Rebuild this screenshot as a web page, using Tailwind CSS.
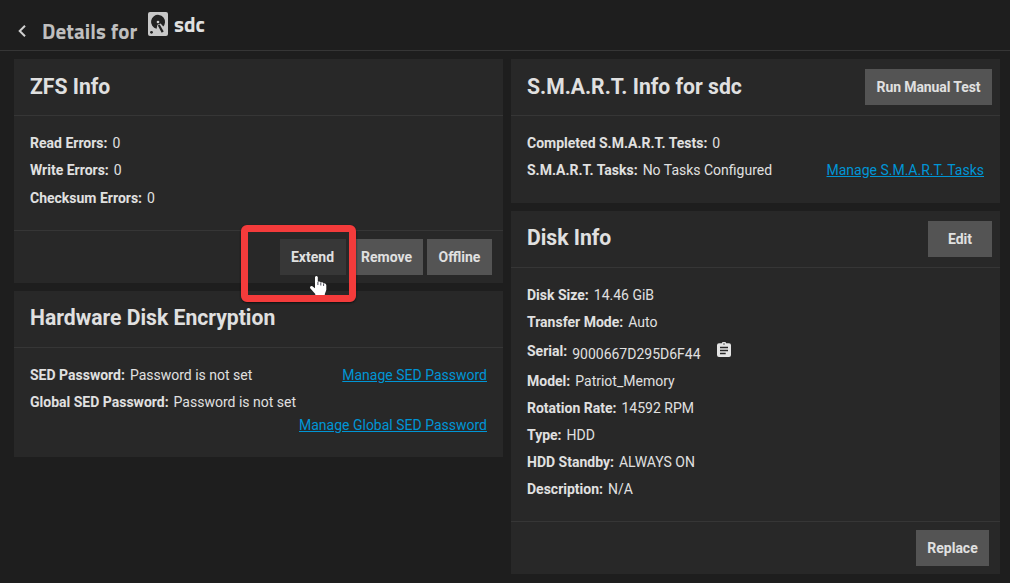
<!DOCTYPE html>
<html lang="en">
<head>
<meta charset="utf-8">
<title>Details for sdc</title>
<script src="https://cdn.jsdelivr.net/npm/@tailwindcss/browser@4"></script>
</head>
<body class="relative h-[583px] w-[1010px] overflow-hidden bg-[#1e1e1e] font-['Roboto',sans-serif] text-sm text-[#e0e0e0]">
<header class="flex h-[51px] border-b border-[#363636] pl-[16px] font-['Titillium_Web','Noto_Sans',sans-serif] text-[21px] font-bold leading-6">
  <svg class="mt-[24px] h-[14px] w-[12px]" viewBox="0 0 12 14" fill="none" stroke="#d0d0d0" stroke-width="2"><path d="M9 1.7 3.7 7 9 12.3"/></svg>
  <h1 class="ml-[14px] mt-[19px] w-[106px] whitespace-nowrap text-[#bfbfbf] tracking-[0.08px]">Details for</h1>
  <svg class="mt-[12px] h-[24px] w-[20px]" viewBox="0 0 20 24"><rect width="20" height="24" rx="2" fill="#c8c8c8"/><path d="M8.6 16.7A7 7 0 1 1 17 10.5Q16.8 12.7 15.3 14.4L12.6 11.4 9.4 12.8Z" fill="#222"/><circle cx="10" cy="10" r="1.3" fill="#d0d0d0"/><circle cx="3.5" cy="20.3" r="1.4" fill="#222"/><path d="M9.8 13.4 11.7 12.6 15.7 19.4 13.7 20.8Z" fill="#222"/></svg>
  <span class="ml-[6px] mt-[12px] tracking-[0.05px]">sdc</span>
</header>
<main class="grid grid-cols-[489px_489px] items-start gap-2 pl-[14px] pt-2">
  <div class="flex flex-col gap-2">
    <section class="flex h-[224px] flex-col bg-[#282828]">
      <h2 class="flex h-[57px] items-center border-b border-[#363636] px-4 pt-px text-[21.15px] font-bold">ZFS Info</h2>
      <div class="flex flex-1 flex-col gap-[7.3px] px-4 pt-[17px] leading-5">
        <p><b class="mr-[5px]">Read Errors:</b>0</p>
        <p><b class="mr-[5px]">Write Errors:</b>0</p>
        <p class="pt-[0.5px]"><b class="mr-[5px]">Checksum Errors:</b>0</p>
      </div>
      <div class="flex h-[53px] justify-end gap-1 border-t border-[#363636] pr-[11px] pt-2 font-bold">
        <button class="h-9 w-[66px] bg-[#373737] pb-px pr-px"><span>Extend</span></button>
        <button class="-ml-px h-9 w-[74px] bg-[#545454] pb-px pl-px"><span>Remove</span></button>
        <button class="h-9 w-[65px] bg-[#545454] pb-px"><span>Offline</span></button>
      </div>
    </section>
    <section class="h-[166px] bg-[#282828]">
      <h2 class="flex h-[57px] items-center border-b border-[#363636] px-4 pb-px text-[21.15px] font-bold">Hardware Disk Encryption</h2>
      <div class="px-4 pt-[17px] leading-5">
        <div class="flex justify-between"><p><b class="mr-[5px]">SED Password:</b>Password is not set</p><a class="text-[#0095d5] underline">Manage SED Password</a></div>
        <p class="mt-[7px]"><b class="mr-[5px]">Global SED Password:</b>Password is not set</p>
        <p class="mt-[3px] text-right"><a class="text-[#0095d5] underline">Manage Global SED Password</a></p>
      </div>
    </section>
  </div>
  <div class="flex flex-col gap-2">
    <section class="h-[144px] bg-[#282828]">
      <div class="flex h-[57px] items-center justify-between border-b border-[#363636] pl-4 pr-2">
        <h2 class="pt-px text-[21.15px] font-bold">S.M.A.R.T. Info for sdc</h2>
        <button class="h-9 w-[127px] bg-[#545454] font-bold tracking-[-0.1px]"><span>Run Manual Test</span></button>
      </div>
      <div class="px-4 pt-[17px] leading-5">
        <p><b class="mr-[5px]">Completed S.M.A.R.T. Tests:</b>0</p>
        <div class="mt-[7px] flex justify-between"><p><b class="mr-[5px]">S.M.A.R.T. Tasks:</b>No Tasks Configured</p><a class="text-[#0095d5] underline">Manage S.M.A.R.T. Tasks</a></div>
      </div>
    </section>
    <section class="flex h-[363px] flex-col bg-[#282828]">
      <div class="flex h-[57px] items-center justify-between border-b border-[#363636] pl-4 pr-2">
        <h2 class="pb-px text-[21.15px] font-bold">Disk Info</h2>
        <button class="h-9 w-[64px] bg-[#545454] pb-px font-bold"><span>Edit</span></button>
      </div>
      <div class="flex flex-1 flex-col gap-[7px] px-4 pt-[17px] leading-5">
        <p><b class="mr-[5px]">Disk Size:</b>14.46 GiB</p>
        <p><b class="mr-[5px]">Transfer Mode:</b>Auto</p>
        <div class="flex h-[25px] pt-[2px]"><b class="mr-[5px]">Serial:</b><span class="pt-[3px]">9000667D295D6F44</span>
          <svg class="ml-[16px] mt-px h-[16px] w-[14px]" viewBox="0 0 14 16"><path d="M2 1.3H4.8A2.3 2.3 0 0 1 9.2 1.3H12Q14 1.3 14 3.3V13Q14 15 12 15H2Q0 15 0 13V3.3Q0 1.3 2 1.3Z" fill="#e4e4e4"/><path d="M3 5.5H11M3 8.5H11M3 11.5H8.7" stroke="#282828" stroke-width="1.4"/><circle cx="7" cy="2" r=".7" fill="#282828"/></svg>
        </div>
        <p><b class="mr-[5px]">Model:</b>Patriot_Memory</p>
        <p><b class="mr-[5px]">Rotation Rate:</b>14592 RPM</p>
        <p><b class="mr-[5px]">Type:</b>HDD</p>
        <p><b class="mr-[5px]">HDD Standby:</b>ALWAYS ON</p>
        <p><b class="mr-[5px]">Description:</b>N/A</p>
      </div>
      <div class="flex h-[53px] justify-end border-t border-[#363636] pr-[11px] pt-2 font-bold"><button class="h-9 w-[73px] bg-[#545454]"><span>Replace</span></button></div>
    </section>
  </div>
</main>
<svg class="absolute left-[309px] top-[275px] h-[22px] w-[18px]" viewBox="0 0 18 22"><path d="M6 2Q7.4 0 8.8 2V6.8Q10.8 6 11.8 7.5Q13.6 6.8 14.6 8.3Q16.9 8 17.3 10V15L15.8 19V21H6.3V19L1 13Q.8 10.8 3 11L6 13.2Z" fill="#fff"/><path d="M8.9 7V10M11.8 7.7V10.5M14.6 8.5V11" stroke="#223" stroke-width=".8"/></svg>
<div class="absolute left-[241px] top-[225px] h-[77px] w-[115px] rounded-[6px] border-7 border-[#f43b3b] shadow-[0_1px_2px_#111]"></div>
</body>
</html>
